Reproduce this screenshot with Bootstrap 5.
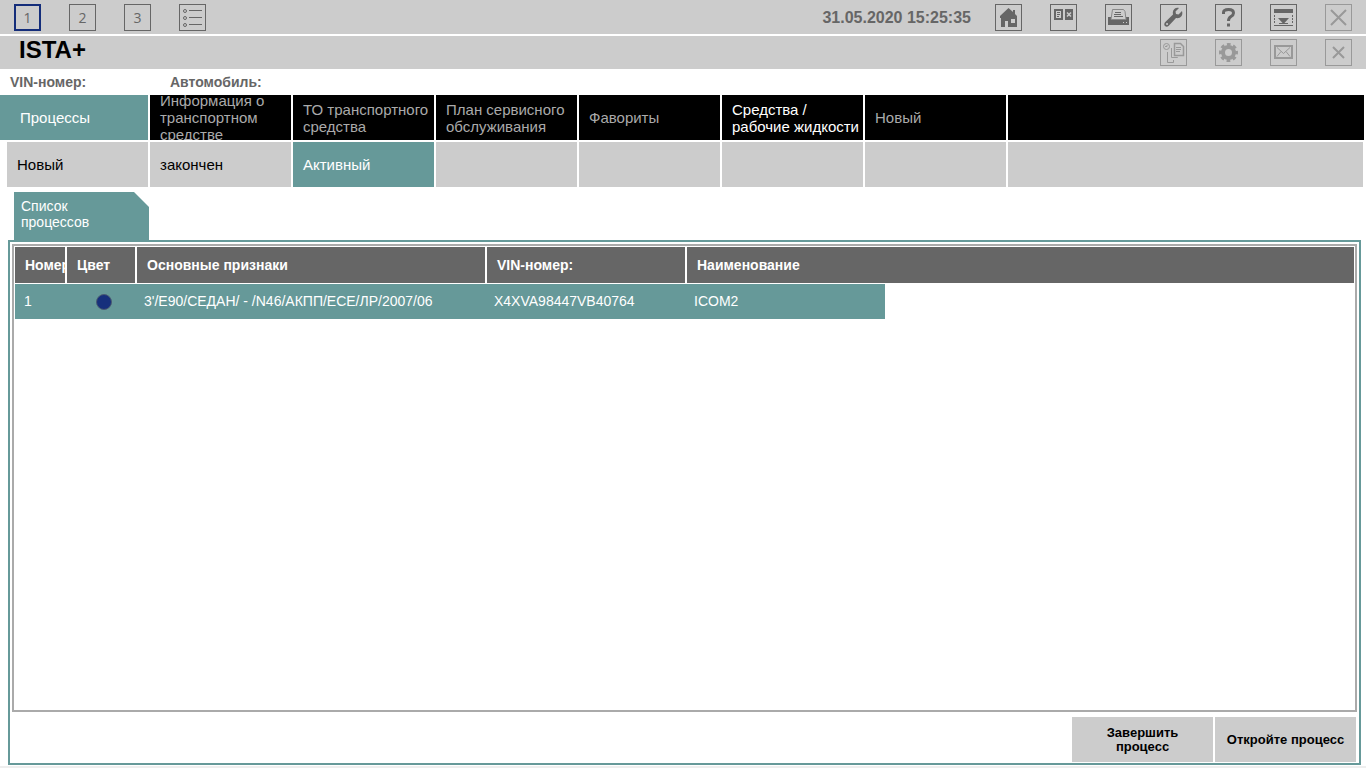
<!DOCTYPE html>
<html lang="ru">
<head>
<meta charset="utf-8">
<meta name="viewport" content="width=device-width, initial-scale=1">
<title>ISTA+</title>
<link href="https://cdn.jsdelivr.net/npm/bootstrap@5.3.0/dist/css/bootstrap.min.css" rel="stylesheet">
<style>
:root { --teal: #669999; --bar: #cccccc; --dark: #666666; --off: #999999; }
body { font-family: "Liberation Sans", Arial, sans-serif; font-size: 15px; line-height: 17px; color: #000; background: #fff; }
button { font-family: inherit; }
.bar { background: var(--bar); padding: 0 14px; }
.bar-top { height: 34px; margin-bottom: 2px; padding-top: 4px; }
.bar-title { height: 33px; padding: 0 14px 0 19px; }
.tool { width: 27px; height: 27px; padding: 0; border: 1px solid var(--dark); border-radius: 0; background: transparent; color: var(--dark); font: 14px/25px "Open Sans", sans-serif; display: block; }
.tool svg { display: block; width: 25px; height: 25px; }
.tool.current { border: 2px solid #142d7a; line-height: 23px; }
.tool:disabled { border-color: var(--off); color: var(--off); }
.tools { gap: 28px; }
.clock { color: var(--dark); font-weight: 700; font-size: 16px; line-height: 27px; margin-right: 24px; }
.app-name { font-size: 24px; line-height: 28px; font-weight: 700; margin: 0; }
.vehicle { height: 26px; font-size: 14px; line-height: 26px; font-weight: 700; color: var(--dark); padding-left: 10px; }
.vehicle span { width: 160px; }
.strip { gap: 2px; margin-bottom: 2px; }
.strip > * { width: 141px; height: 45px; padding: 0 0 0 10px; flex: none; display: flex; align-items: center; overflow: hidden; text-decoration: none; }
.strip > .rest { flex: 1 1 0; }
.strip-main { padding-right: 2px; }
.strip-main > * { background: #000; color: #aaa; }
.strip-main > .first { width: 148px; padding-left: 20px; }
.strip-main > .enabled { color: #fff; }
.strip-sub { padding: 0 3px 0 7px; }
.strip-sub > * { background: var(--bar); color: #000; }
.strip > .chosen { background: var(--teal); color: #fff; }
.list-tab { width: 135px; height: 48px; margin: 3px 0 0 14px; padding: 6px 20px 6px 7px; font-size: 14px; line-height: 16px; background: var(--teal); color: #fff; text-decoration: none; clip-path: polygon(0 0, 120px 0, 100% 15px, 100% 100%, 0 100%); }
.panel { border: 2px solid var(--teal); margin: 0 5px 1px 8px; padding: 2px 2px 1px; }
.list-frame { border: 2px solid #aaa; padding: 1px; }
.processes { table-layout: fixed; width: 100%; font-size: 14px; border-collapse: separate; border-spacing: 0; }
.processes th { background: var(--dark); color: #fff; height: 37px; padding: 0 0 0 10px; border-right: 2px solid #fff; border-bottom: 1px solid #fff; overflow: hidden; white-space: nowrap; }
.processes th:last-child { border-right: 0; }
.processes td { background: var(--teal); color: #fff; height: 35px; padding: 0 0 0 7px; white-space: nowrap; }
.processes td:first-child { padding-left: 9px; }
.processes td.swatch { padding-left: 4px; }
.processes td.blank { background: #fff; }
.col-num { width: 52px; } .col-color { width: 70px; } .col-feat { width: 350px; } .col-vin { width: 200px; } .col-name { width: 198px; }
.dot { display: block; width: 16px; height: 16px; margin: auto; border-radius: 50%; background: #16307c; border: 1px solid #4a5a72; }
.actions { gap: 2px; padding-top: 5px; padding-right: 1px; }
.actions button { width: 141px; height: 45px; padding: 0 8px; border: 0; border-radius: 0; background: var(--bar); color: #000; font-weight: 700; font-size: 13px; line-height: 14px; }
.foot { height: 2px; background: #eee; }
</style>
</head>
<body class="vh-100 d-flex flex-column overflow-hidden">
<header>
  <div class="bar bar-top d-flex">
    <div class="tools d-flex">
      <button class="tool current" type="button">1</button>
      <button class="tool" type="button">2</button>
      <button class="tool" type="button">3</button>
      <button class="tool" type="button" aria-label="Список"><svg viewBox="0 0 25 25" fill="none" stroke="currentColor"><circle cx="5" cy="6" r="1.500"/><circle cx="5" cy="13" r="1.500"/><circle cx="5" cy="20" r="1.500"/><path d="M9 5.500h13M9 12.500h13M9 19.500h13"/></svg></button>
    </div>
    <time class="clock ms-auto">31.05.2020 15:25:35</time>
    <div class="tools d-flex">
      <button class="tool" type="button" aria-label="Домой"><svg viewBox="0 0 25 25"><path fill="currentColor" fill-rule="evenodd" d="M4 13v-2l8.500-8L17 7V5h2v4l2 2v11h-9v-6H9v6H5v-9zM15 14v4h4v-4z"/></svg></button>
      <button class="tool" type="button" aria-label="Соединение"><svg viewBox="0 0 25 25"><path fill="currentColor" fill-rule="evenodd" d="M3 4h9v11H3zM5 6v7h5V6zM14 4h8v11h-8z"/><path d="M6 7.500h3M6 9.500h3M6 11.500h2" stroke="currentColor"/><path d="M16 7.500l4 4M20 7.500l-4 4" stroke="#ccc" stroke-width="1.500"/></svg></button>
      <button class="tool" type="button" aria-label="Печать"><svg viewBox="0 0 25 25"><path fill="currentColor" d="M2 12h3v3h15v-3h3v8H2z"/><path d="M5 14.500l1.500-10h11l1.500 2 1 8z" fill="#ccc" stroke="#888"/><path d="M9 7.500h6M8 9.500h7M8 11.500h9" stroke="currentColor"/><path d="M17 17.500h1M20 17.500h1" stroke="#ccc"/></svg></button>
      <button class="tool" type="button" aria-label="Настройки"><svg viewBox="0 0 25 25"><path fill="currentColor" fill-rule="evenodd" d="M21 6l-3.500 3.500-2.500-.5-.5-2.500L18 3c-3-.8-6 1-6.200 4.500l.2 2L4.300 17c-2.800 3 .8 6.400 3.500 3.700L15 13c4 .8 7.500-2 6-7zM6 18a1 1 0 1 1 .1 2A1 1 0 0 1 6 18z"/></svg></button>
      <button class="tool" type="button" aria-label="Справка"><svg viewBox="0 0 25 25" fill="none" stroke="currentColor" stroke-width="3"><path d="M7.500 9V7.500Q7.500 4.500 12.500 4.500T17.500 8Q17.500 10 15 11.500T12.500 16M12.500 18.500v3"/></svg></button>
      <button class="tool" type="button" aria-label="Свернуть"><svg viewBox="0 0 25 25"><path fill="currentColor" d="M3 4h19v4H3zM3 20h19v1H3zM7 13h11l-5.500 6zM8 18h9v1H8z"/><path d="M3.500 10v9M21.500 10v9" stroke="currentColor" stroke-dasharray="2 1"/></svg></button>
      <button class="tool" type="button" aria-label="Закрыть" disabled><svg viewBox="0 0 25 25" stroke="currentColor" stroke-width="2"><path d="M5 5l15 15M20 5L5 20"/></svg></button>
    </div>
  </div>
  <div class="bar bar-title d-flex justify-content-between">
    <h1 class="app-name">ISTA+</h1>
    <div class="tools d-flex align-items-center">
      <button class="tool" type="button" aria-label="Документы" disabled><svg viewBox="0 0 25 25" fill="none" stroke="currentColor"><circle cx="5.500" cy="6.500" r="3"/><path d="M4 6.500h2V5M10.500 8v9.500h6V17M6.500 12v10.500h6V20"/><path d="M13.500 3.500h6l3 3v9h-9z" stroke-width="1.500"/><path d="M15 7.500h5M15 9.500h5M15 11.500h4"/></svg></button>
      <button class="tool" type="button" aria-label="Параметры" disabled><svg viewBox="0 0 25 25" fill="none" stroke="currentColor"><circle cx="12.500" cy="12.500" r="5.500" stroke-width="4"/><circle cx="12.500" cy="12.500" r="8" stroke-width="3" stroke-dasharray="3.600 2.683" stroke-dashoffset="1.800"/></svg></button>
      <button class="tool" type="button" aria-label="Почта" disabled><svg viewBox="0 0 25 25" fill="none" stroke="currentColor"><path stroke-width="2" d="M4 6h17v12H4z"/><path d="M6 7.500l6.500 6 6.500-6M6 16.500l4-5M19 16.500l-4-5"/></svg></button>
      <button class="tool" type="button" aria-label="Закрыть операцию" disabled><svg viewBox="0 0 25 25" stroke="currentColor" stroke-width="2"><path d="M7 7l11 11M18 7L7 18"/></svg></button>
    </div>
  </div>
  <div class="vehicle d-flex"><span>VIN-номер:</span><span>Автомобиль:</span></div>
</header>
<nav class="strip strip-main d-flex" aria-label="Главное меню">
  <a href="#" class="first chosen">Процессы</a>
  <a href="#">Информация о транспортном средстве</a>
  <a href="#">ТО транспортного средства</a>
  <a href="#">План сервисного обслуживания</a>
  <a href="#">Фавориты</a>
  <a href="#" class="enabled">Средства / рабочие жидкости</a>
  <a href="#">Новый</a>
  <div class="rest"></div>
</nav>
<nav class="strip strip-sub d-flex" aria-label="Процессы">
  <a href="#">Новый</a>
  <a href="#">закончен</a>
  <a href="#" class="chosen">Активный</a>
  <div></div><div></div><div></div><div></div>
  <div class="rest"></div>
</nav>
<a href="#" class="list-tab d-block">Список процессов</a>
<main class="panel flex-grow-1 d-flex flex-column">
  <div class="list-frame flex-grow-1">
    <table class="processes">
      <colgroup><col class="col-num"><col class="col-color"><col class="col-feat"><col class="col-vin"><col class="col-name"><col></colgroup>
      <thead><tr><th>Номер</th><th>Цвет</th><th>Основные признаки</th><th>VIN-номер:</th><th colspan="2">Наименование</th></tr></thead>
      <tbody><tr><td>1</td><td class="swatch"><span class="dot"></span></td><td>3'/E90/СЕДАН/ - /N46/АКПП/ЕСЕ/ЛР/2007/06</td><td>X4XVA98447VB40764</td><td>ICOM2</td><td class="blank"></td></tr></tbody>
    </table>
  </div>
  <div class="actions d-flex justify-content-end">
    <button type="button">Завершить процесс</button>
    <button type="button">Откройте процесс</button>
  </div>
</main>
<div class="foot"></div>
<script src="https://cdn.jsdelivr.net/npm/bootstrap@5.3.0/dist/js/bootstrap.bundle.min.js"></script>
</body>
</html>
